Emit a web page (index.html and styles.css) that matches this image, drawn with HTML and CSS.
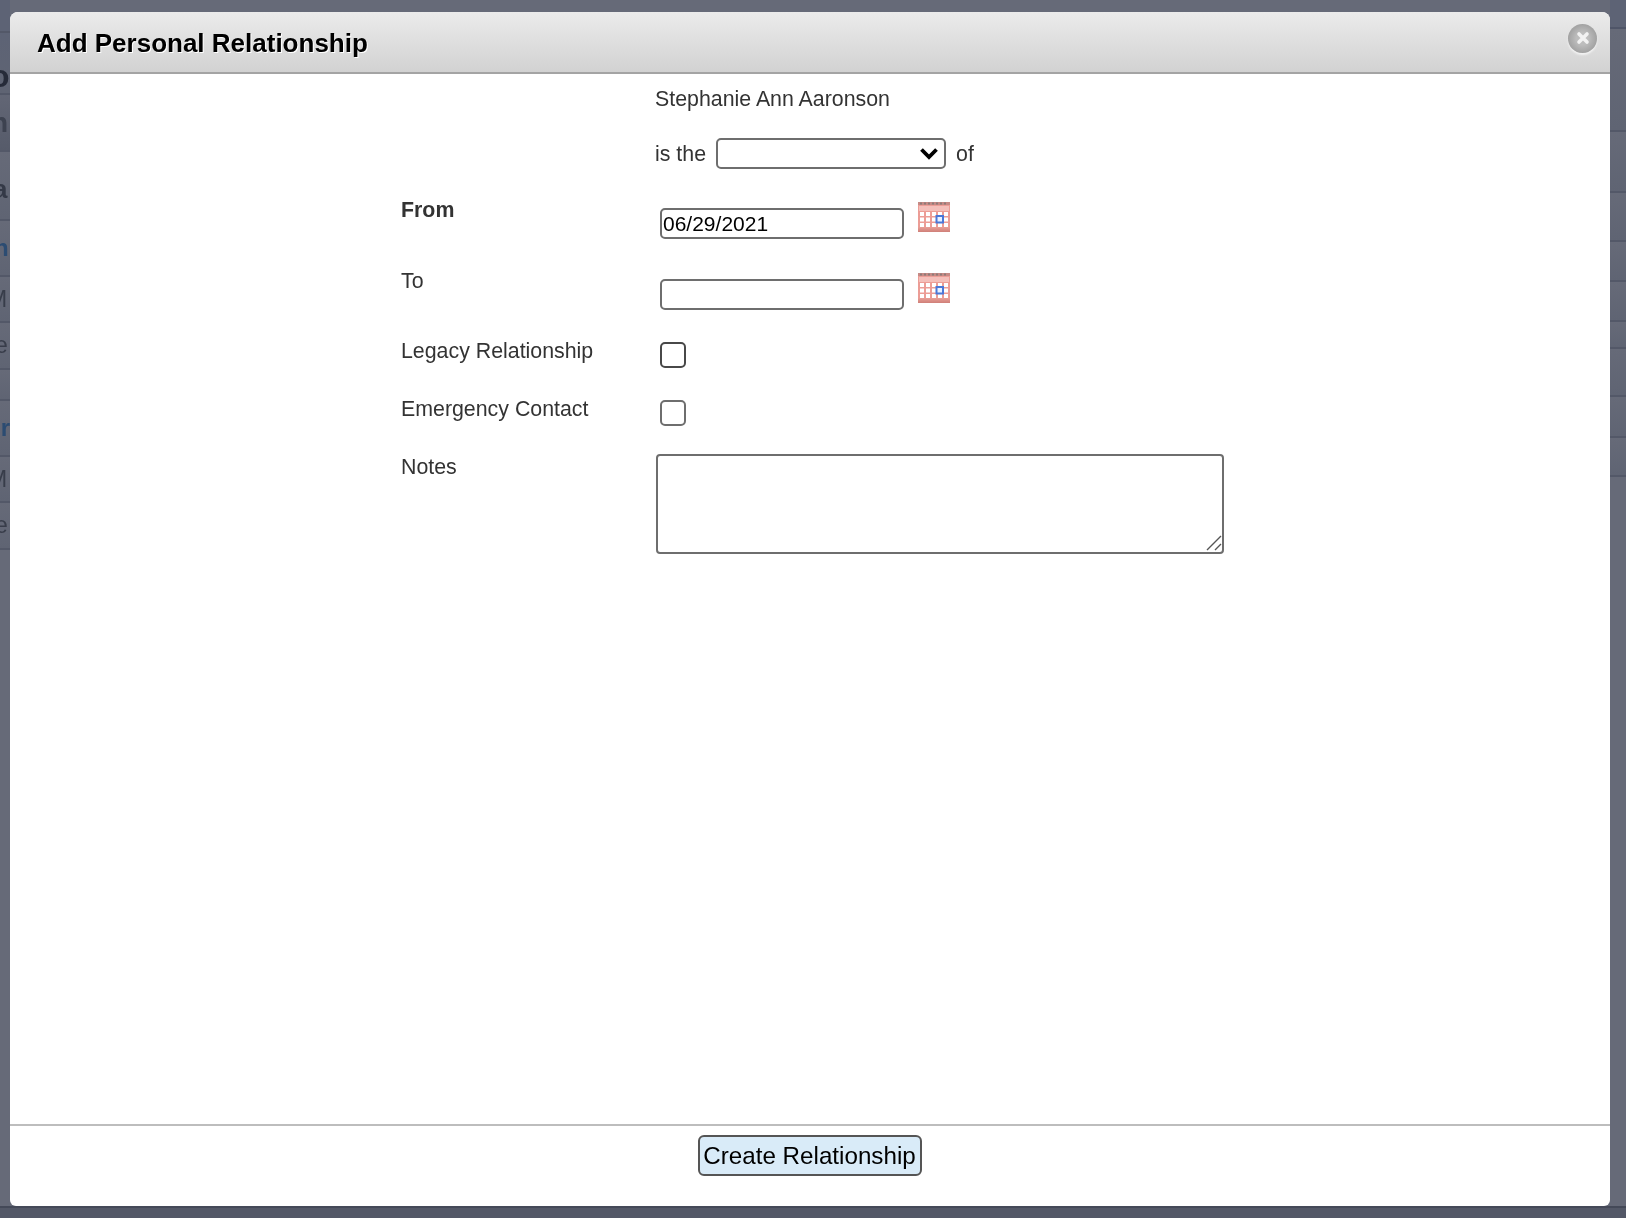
FILE: index.html
```html
<!DOCTYPE html>
<html lang="en">
<head>
    <meta charset="UTF-8">
    <meta name="viewport" content="width=device-width, initial-scale=1.0">
    <title>Add Personal Relationship</title>
    <link rel="stylesheet" href="styles.css">
</head>
<body>
    <!-- page behind the overlay, only its edges are visible -->
    <div class="backdrop">
        <div class="bg-columns">
            <div class="bg-col">
                <div class="bg-row bg-top"></div>
                <div class="bg-row bg-title"><span class="bg-text bg-o">o</span></div>
                <div class="bg-row bg-band"><span class="bg-text bg-n">n</span></div>
                <div class="bg-row bg-band2"><span class="bg-text bg-a">a</span></div>
                <div class="bg-row bg-link"><span class="bg-text bg-blue">n</span></div>
                <div class="bg-row bg-small"><span class="bg-text bg-plain">M</span></div>
                <div class="bg-row bg-small2"><span class="bg-text bg-plain bg-e">e</span></div>
                <div class="bg-row bg-gap"></div>
                <div class="bg-row bg-link"><span class="bg-text bg-blue bg-or">or</span></div>
                <div class="bg-row bg-small"><span class="bg-text bg-plain">M</span></div>
                <div class="bg-row bg-small2"><span class="bg-text bg-plain bg-e">e</span></div>
            </div>
            <div class="bg-col bg-col-right">
                <div class="bg-row r-top"></div>
                <div class="bg-row r-a"></div>
                <div class="bg-row r-b"></div>
                <div class="bg-row r-c"></div>
                <div class="bg-row r-d"></div>
                <div class="bg-row r-d"></div>
                <div class="bg-row r-e"></div>
                <div class="bg-row r-f"></div>
                <div class="bg-row r-g"></div>
                <div class="bg-row r-h"></div>
            </div>
        </div>
        <div class="bg-footer"></div>
    </div>

    <div class="modal">
        <div class="modal-header">
            <h1 class="modal-title">Add Personal Relationship</h1>
            <button class="modal-close" aria-label="Close">
                <svg class="close-x" width="18" height="18" viewBox="0 0 18 18">
                    <path d="M5 5L13 13M13 5L5 13" stroke="#f2f2f2" stroke-width="3.6" stroke-linecap="round"></path>
                </svg>
            </button>
        </div>

        <div class="modal-body">
            <form class="rel-form">
                <div class="form-row row-name">
                    <div class="form-label"></div>
                    <div class="form-value">Stephanie Ann Aaronson</div>
                </div>
                <div class="form-row row-type">
                    <div class="form-label"></div>
                    <div class="form-value type-value">
                        <span class="type-text">is the</span>
                        <div class="select-wrap">
                            <select class="type-select"><option></option></select>
                            <svg class="select-arrow" width="20" height="13" viewBox="0 0 20 13">
                                <path d="M2.5 2.5L10 10L17.5 2.5" fill="none" stroke="#000000" stroke-width="3.8"></path>
                            </svg>
                        </div>
                        <span class="type-text">of</span>
                    </div>
                </div>
                <div class="form-row row-date">
                    <label class="form-label label-strong">From</label>
                    <div class="form-value date-value">
                        <input type="text" class="date-input" value="06/29/2021">
                        <svg class="cal-icon" width="32" height="30" viewBox="0 0 32 30">
                            <use href="#calendar"></use>
                        </svg>
                    </div>
                </div>
                <div class="form-row row-date">
                    <label class="form-label">To</label>
                    <div class="form-value date-value">
                        <input type="text" class="date-input">
                        <svg class="cal-icon" width="32" height="30" viewBox="0 0 32 30">
                            <use href="#calendar"></use>
                        </svg>
                    </div>
                </div>
                <div class="form-row row-check">
                    <label class="form-label">Legacy Relationship</label>
                    <div class="form-value"><span class="check-box check-focus"></span></div>
                </div>
                <div class="form-row row-check">
                    <label class="form-label">Emergency Contact</label>
                    <div class="form-value"><span class="check-box"></span></div>
                </div>
                <div class="form-row row-notes">
                    <label class="form-label">Notes</label>
                    <div class="form-value notes-wrap">
                        <textarea class="notes-input"></textarea>
                        <svg class="notes-grip" width="16" height="16" viewBox="0 0 16 16">
                            <path d="M1 15L15 1M9 15L15 9" stroke="#555555" stroke-width="1.4"></path>
                        </svg>
                    </div>
                </div>
            </form>
        </div>

        <div class="modal-footer">
            <button class="create-btn">Create Relationship</button>
        </div>
    </div>

    <svg width="0" height="0" class="svg-defs">
        <defs>
            <linearGradient id="calBottom" x1="0" y1="0" x2="0" y2="1">
                <stop offset="0" stop-color="#e9a098"></stop>
                <stop offset="1" stop-color="#cf7f78"></stop>
            </linearGradient>
            <symbol id="calendar" viewBox="0 0 32 30">
                <rect x="0" y="0" width="32" height="30" fill="#ec9d96"></rect>
                <rect x="0" y="0" width="32" height="3" fill="#c58a85"></rect>
                <path d="M2 1.5H30" stroke="#8f7a78" stroke-width="2" stroke-dasharray="2 2"></path>
                <rect x="1" y="4" width="30" height="5" fill="#f4bfba"></rect>
                <rect x="0" y="25" width="32" height="5" fill="url(#calBottom)"></rect>
                <g fill="#ffffff">
                    <rect x="2" y="10" width="4" height="4"></rect>
                    <rect x="8" y="10" width="4" height="4"></rect>
                    <rect x="14" y="10" width="4" height="4"></rect>
                    <rect x="20" y="10" width="4" height="4"></rect>
                    <rect x="26" y="10" width="4" height="4"></rect>
                    <rect x="2" y="15.5" width="4" height="4"></rect>
                    <rect x="8" y="15.5" width="4" height="4"></rect>
                    <rect x="14" y="15.5" width="4" height="4"></rect>
                    <rect x="26" y="15.5" width="4" height="4"></rect>
                    <rect x="2" y="21" width="4" height="4"></rect>
                    <rect x="8" y="21" width="4" height="4"></rect>
                    <rect x="14" y="21" width="4" height="4"></rect>
                    <rect x="20" y="21" width="4" height="4"></rect>
                    <rect x="26" y="21" width="4" height="4"></rect>
                </g>
                <rect x="18.5" y="14" width="6.5" height="6.5" fill="#e8f0ff" stroke="#4a78d8" stroke-width="2"></rect>
            </symbol>
        </defs>
    </svg>
</body>
</html>
```

FILE: styles.css
```css
* {
    box-sizing: border-box;
}

html, body {
    margin: 0;
    height: 100%;
}

body {
    background: #666a78;
    font-family: "Liberation Sans", Arial, sans-serif;
    font-size: 21.35px;
    color: #333333;
    overflow: hidden;
}

.svg-defs {
    position: absolute;
}

/* page behind the overlay */
.backdrop {
    height: 100%;
    display: flex;
    flex-direction: column;
    filter: blur(0.6px);
}

.bg-columns {
    flex: 1;
    display: flex;
    justify-content: space-between;
}

.bg-col {
    width: 10px;
}

.bg-col-right {
    width: 16px;
}

.bg-footer {
    height: 12px;
    background: #535867;
    border-top: 2px solid #444958;
}

.bg-row {
    border-bottom: 2px solid #535868;
    display: flex;
    align-items: center;
    overflow: hidden;
    height: 56px;
    background: linear-gradient(to bottom, #666a78, #5f6473);
}

.bg-top {
    height: 33px;
    background: #5d6375;
}

.bg-title {
    height: 62px;
    padding-top: 26px;
    background: linear-gradient(to bottom, #5d6375, #5f6473);
}

.bg-band {
    height: 57px;
    background: linear-gradient(to bottom, #626675, #565b6a);
}

.bg-band2 {
    height: 69px;
    padding-top: 8px;
}

.bg-link {
    height: 56px;
}

.bg-small {
    height: 46px;
}

.bg-small2 {
    height: 47px;
}

.bg-gap {
    height: 31px;
}

.r-top {
    height: 29px;
    background: #5d6375;
    border-bottom-color: #4f5568;
}

.r-a {
    height: 103px;
}

.r-b {
    height: 61px;
}

.r-c {
    height: 49px;
}

.r-d {
    height: 40px;
}

.r-e {
    height: 27px;
}

.r-f {
    height: 48px;
}

.r-g {
    height: 41px;
}

.r-h {
    height: 39px;
}

.bg-text {
    font-size: 24px;
    font-weight: bold;
    color: #3f4452;
    margin-left: -9px;
    flex: none;
}

.bg-o {
    font-size: 32px;
    color: #262b39;
    margin-left: -10px;
}

.bg-n {
    font-size: 28px;
    color: #3d4250;
    margin-left: -9px;
}

.bg-a {
    font-size: 26px;
    color: #343947;
    margin-left: -7px;
}

.bg-blue {
    color: #2c4c72;
    margin-left: -6px;
}

.bg-or {
    margin-left: -14px;
}

.bg-plain {
    font-weight: normal;
    font-size: 23px;
    color: #383d4a;
    margin-left: -12px;
}

.bg-e {
    margin-left: -5px;
}

/* dialog */
.modal {
    position: fixed;
    left: 10px;
    top: 12px;
    width: 1600px;
    height: 1194px;
    background: #ffffff;
    border-radius: 8px 8px 6px 6px;
    display: flex;
    flex-direction: column;
    overflow: hidden;
}

.modal-header {
    height: 62px;
    flex: none;
    background: linear-gradient(to bottom, #ebebeb, #d2d2d2);
    border-bottom: 2px solid #a4a4a4;
    display: flex;
    align-items: center;
    justify-content: space-between;
    padding: 2px 13px 0 27px;
}

.modal-title {
    margin: 0;
    font-size: 26px;
    font-weight: bold;
    color: #000000;
    text-shadow: 1px 1px 0 #ffffff;
}

.modal-close {
    width: 29px;
    height: 29px;
    margin-top: -10px;
    padding: 0;
    border: none;
    border-radius: 50%;
    background: radial-gradient(circle at 50% 50%, #bdbdbd 30%, #8e8e8e 100%);
    box-shadow: 0 2px 2px #f2f2f2;
    display: flex;
    align-items: center;
    justify-content: center;
}

.close-x {
    filter: blur(0.4px);
}

.modal-body {
    flex: 1;
}

.rel-form {
    padding: 0 0 0 391px;
}

.form-row {
    display: flex;
}

.form-label {
    width: 254px;
    flex: none;
}

.label-strong {
    font-weight: bold;
}

.row-name {
    height: 53px;
    padding-top: 13px;
}

.row-type {
    height: 70px;
    padding-top: 11px;
}

.type-value {
    display: flex;
    align-items: center;
    gap: 10px;
    height: 31px;
}

.type-text {
    padding-top: 2px;
}

.select-wrap {
    position: relative;
    width: 230px;
    height: 31px;
}

.type-select {
    display: block;
    width: 100%;
    height: 100%;
    appearance: none;
    background: #ffffff;
    border: 2px solid #6e6e6e;
    border-radius: 5px;
}

.select-arrow {
    position: absolute;
    right: 7px;
    top: 9px;
}

.row-date {
    height: 70.5px;
    padding-top: 1px;
}

.date-value {
    display: flex;
    align-items: flex-start;
    padding-left: 5px;
    gap: 14px;
}

.date-input {
    width: 244px;
    height: 31px;
    margin-top: 10px;
    padding: 0 1px;
    font-family: "Liberation Sans", Arial, sans-serif;
    font-size: 21px;
    color: #000000;
    border: 2px solid #6e6e6e;
    border-radius: 5px;
    outline: none;
}

.cal-icon {
    display: block;
    margin-top: 4px;
    filter: blur(0.6px);
}

.row-check {
    height: 58px;
    padding-top: 1px;
}

.check-box {
    display: block;
    width: 26px;
    height: 26px;
    margin: 3px 0 0 5px;
    background: #ffffff;
    border: 2px solid #6e6e6e;
    border-radius: 5px;
}

.check-focus {
    border-color: #484848;
}

.row-notes {
    padding-top: 1px;
}

.notes-wrap {
    position: relative;
    margin: -1px 0 0 1px;
}

.notes-input {
    display: block;
    width: 568px;
    height: 100px;
    border: 2px solid #6e6e6e;
    border-radius: 4px;
    outline: none;
    resize: none;
}

.notes-grip {
    position: absolute;
    right: 2px;
    bottom: 3px;
}

.modal-footer {
    height: 82px;
    flex: none;
    border-top: 2px solid #bdbdbd;
    display: flex;
    justify-content: center;
    padding: 9px 1px 0 0;
}

.create-btn {
    height: 41px;
    width: 224px;
    padding: 0;
    font-family: "Liberation Sans", Arial, sans-serif;
    font-size: 24.2px;
    color: #000000;
    background: #d9ebf8;
    border: 2px solid #555555;
    border-radius: 6px;
}
```
